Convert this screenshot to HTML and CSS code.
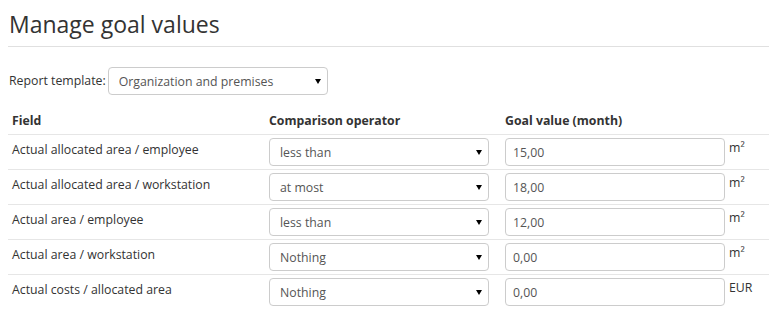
FILE: index.html
```html
<!DOCTYPE html>
<html lang="en">
<head>
<meta charset="utf-8">
<title>Manage goal values</title>
<link rel="stylesheet" href="styles.css">
</head>
<body>
<div class="page">
  <h1 class="title">Manage goal values</h1>
  <div class="template-row">
    <label class="template-label" for="tpl">Report template:</label>
    <div class="select-wrap tpl-select">
      <select id="tpl" class="select"><option>Organization and premises</option></select>
    </div>
  </div>
  <table class="goals">
    <thead>
      <tr>
        <th class="col-field">Field</th>
        <th class="col-op">Comparison operator</th>
        <th class="col-goal">Goal value (month)</th>
      </tr>
    </thead>
    <tbody>
      <tr>
        <td class="field">Actual allocated area / employee</td>
        <td><div class="select-wrap"><select class="select"><option>less than</option></select></div></td>
        <td><div class="goal"><input class="input" value="15,00"><span class="unit">m²</span></div></td>
      </tr>
      <tr>
        <td class="field">Actual allocated area / workstation</td>
        <td><div class="select-wrap"><select class="select"><option>at most</option></select></div></td>
        <td><div class="goal"><input class="input" value="18,00"><span class="unit">m²</span></div></td>
      </tr>
      <tr>
        <td class="field">Actual area / employee</td>
        <td><div class="select-wrap"><select class="select"><option>less than</option></select></div></td>
        <td><div class="goal"><input class="input" value="12,00"><span class="unit">m²</span></div></td>
      </tr>
      <tr>
        <td class="field">Actual area / workstation</td>
        <td><div class="select-wrap"><select class="select"><option>Nothing</option></select></div></td>
        <td><div class="goal"><input class="input" value="0,00"><span class="unit">m²</span></div></td>
      </tr>
      <tr>
        <td class="field">Actual costs / allocated area</td>
        <td><div class="select-wrap"><select class="select"><option>Nothing</option></select></div></td>
        <td><div class="goal"><input class="input" value="0,00"><span class="unit">EUR</span></div></td>
      </tr>
    </tbody>
  </table>
</div>
</body>
</html>
```
FILE: styles.css
```css
html, body {
  margin: 0;
  padding: 0;
  background: #fff;
}
body {
  font-family: "Open Sans", "Noto Sans", "DejaVu Sans", sans-serif;
  font-size: 12.3px;
  color: #333;
}
.page {
  padding: 0 0 0 8px;
}
.title {
  margin: 0;
  padding: 9px 0 0 1px;
  height: 37px;
  font-size: 23px;
  font-weight: 400;
  line-height: 30px;
  color: #333;
  border-bottom: 1px solid #e0e0e0;
}
.template-row {
  display: flex;
  align-items: center;
  margin-top: 20px;
  padding-left: 1px;
  gap: 2px;
}
.template-label {
  line-height: 28px;
}
.select-wrap {
  position: relative;
  width: 220px;
  height: 28px;
}
.select-wrap::after {
  content: "";
  position: absolute;
  right: 7px;
  top: 12px;
  border-left: 3.5px solid transparent;
  border-right: 3.5px solid transparent;
  border-top: 5px solid #000;
  pointer-events: none;
}
.select {
  -webkit-appearance: none;
  appearance: none;
  box-sizing: border-box;
  width: 100%;
  height: 28px;
  margin: 0;
  padding: 0 20px 0 10px;
  border: 1px solid #ccc;
  border-radius: 4px;
  background: #fff;
  font-family: inherit;
  font-size: 12.3px;
  color: #555;
}
.goals {
  border-collapse: collapse;
  width: 761px;
  margin-top: 15px;
}
.goals th {
  text-align: left;
  font-weight: 700;
  padding: 2px 0 4px 4px;
  line-height: 18px;
  border-bottom: 1px solid #e6e6e6;
}
.goals th.col-field { width: 253px; }
.goals th.col-op { width: 232px; }
.goals td {
  vertical-align: top;
  padding: 3px 0 3px 4px;
  height: 28px;
  border-bottom: 1px solid #e6e6e6;
}
.goals td.field {
  padding-top: 6px;
  line-height: 18px;
  height: 25px;
}
.goal {
  display: flex;
  align-items: flex-start;
  gap: 4px;
}
.input {
  box-sizing: border-box;
  width: 220px;
  height: 28px;
  margin: 0;
  padding: 0 7px;
  border: 1px solid #ccc;
  border-radius: 4px;
  font-family: inherit;
  font-size: 12.3px;
  color: #555;
}
.unit {
  padding-top: 2px;
  line-height: 16px;
  color: #333;
}
```
